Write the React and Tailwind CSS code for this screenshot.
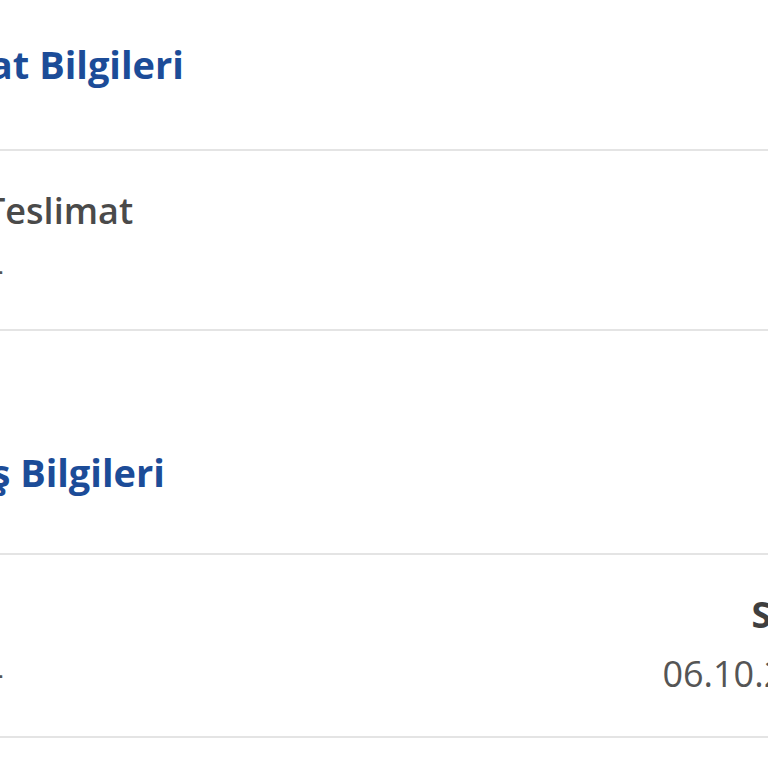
const font = { fontFamily: '"Open Sans", "Liberation Sans", sans-serif' };

function SectionTitle({ children, className }) {
  return (
    <div className={className}>
      <h2 className="text-[38px] leading-[44px] font-bold text-[#1c4c98] whitespace-nowrap">
        {children}
      </h2>
    </div>
  );
}

function InfoRow({ left, right, className }) {
  return (
    <div className={`flex justify-between pt-[38px] pl-[119px] ${className}`}>
      <div className="flex flex-col gap-[15px]">
        <div className="text-[36px] leading-[44px] font-semibold text-[#4a4a4a] whitespace-nowrap">
          {left.label || "\u00a0"}
        </div>
        <div className="pl-[7px] text-[36px] leading-[44px] text-[#555] whitespace-nowrap">{left.value}</div>
      </div>
      {right && (
        <div className="flex flex-col items-end gap-[15px]">
          <div className="-mr-[26px] text-[36px] leading-[44px] font-bold text-[#3f3f3f] whitespace-nowrap">
            {right.label}
          </div>
          <div className="text-[36px] leading-[44px] text-[#555] whitespace-nowrap">{right.value}</div>
        </div>
      )}
    </div>
  );
}

export default function App() {
  return (
    <div className="w-[768px] h-[768px] overflow-hidden bg-white" style={font}>
      <div className="-ml-[134px] w-[980px]">
        <SectionTitle className="pt-[42px] h-[151px] border-b-2 border-[#e4e4e4]">
          Teslimat Bilgileri
        </SectionTitle>
        <InfoRow
          className="h-[180px] border-b-2 border-[#e4e4e4]"
          left={{ label: "Teslimat", value: "-" }}
        />
        <SectionTitle className="pl-[17px] pt-[119px] h-[224px] border-b-2 border-[#e4e4e4]">
          Sipariş Bilgileri
        </SectionTitle>
        <InfoRow
          className="h-[183px] border-b-2 border-[#e4e4e4]"
          left={{ label: "", value: "-" }}
          right={{ label: "Sipariş", value: "06.10.2023" }}
        />
      </div>
    </div>
  );
}
